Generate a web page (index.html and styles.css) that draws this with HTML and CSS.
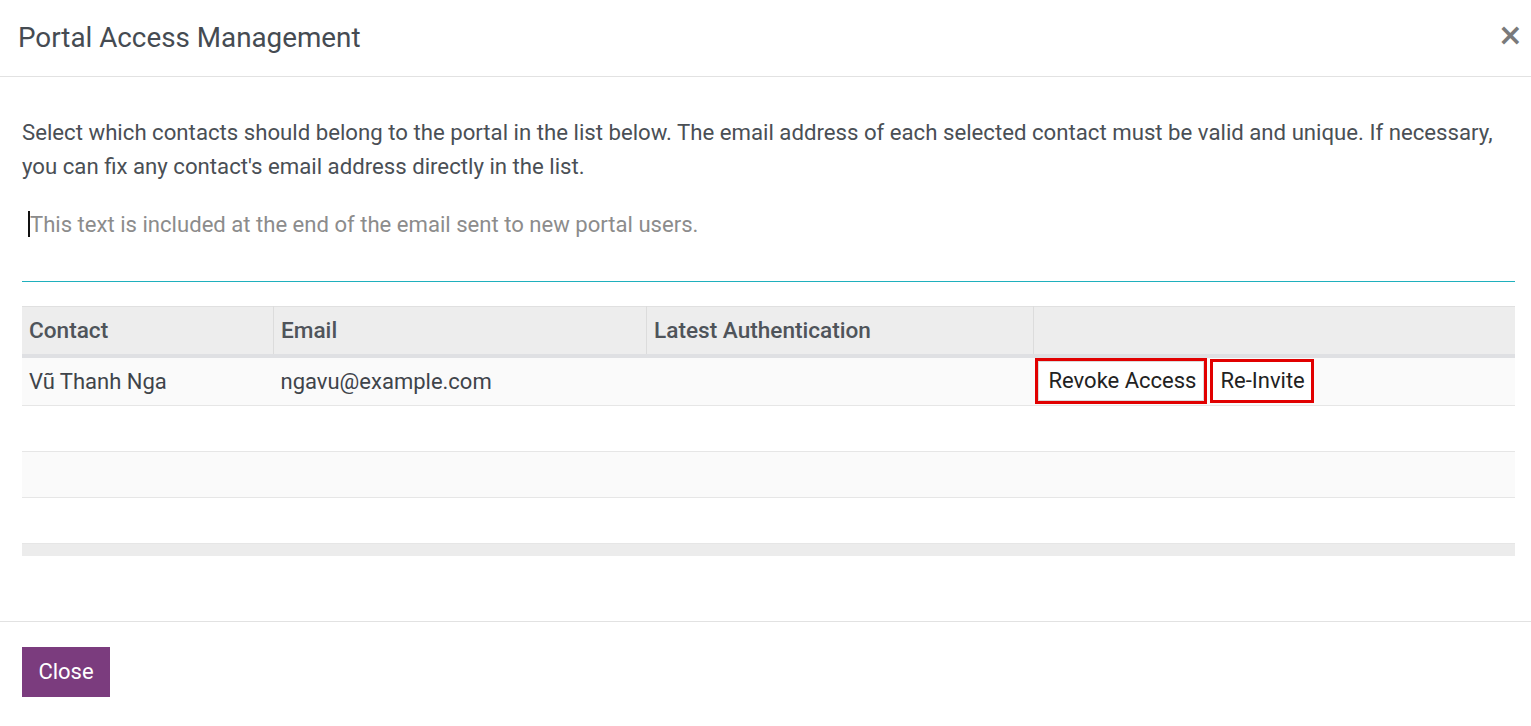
FILE: index.html
```html
<!DOCTYPE html>
<html lang="en">
<head>
<meta charset="utf-8">
<title>Portal Access Management</title>
<link rel="stylesheet" href="styles.css">
</head>
<body>
<div class="modal">
  <header class="modal-header">
    <h4 class="modal-title">Portal Access Management</h4>
    <button class="close" aria-label="Close">×</button>
  </header>
  <main class="modal-body">
    <p class="intro">Select which contacts should belong to the portal in the list below. The email address of each selected contact must be valid and unique. If necessary, you can fix any contact's email address directly in the list.</p>
    <div class="note"><span class="caret"></span><span class="placeholder">This text is included at the end of the email sent to new portal users.</span></div>
    <table class="list">
      <thead>
        <tr>
          <th class="c1">Contact</th>
          <th class="c2">Email</th>
          <th class="c3">Latest Authentication</th>
          <th class="c4"></th>
        </tr>
      </thead>
      <tbody>
        <tr class="data">
          <td>Vũ Thanh Nga</td>
          <td>ngavu@example.com</td>
          <td></td>
          <td class="actions"><span class="hl hl1"><button class="btn">Revoke Access</button></span><span class="hl hl2"><button class="btn">Re-Invite</button></span></td>
        </tr>
        <tr class="empty white"><td></td><td></td><td></td><td></td></tr>
        <tr class="empty grey"><td></td><td></td><td></td><td></td></tr>
        <tr class="empty white"><td></td><td></td><td></td><td></td></tr>
      </tbody>
      <tfoot><tr><td colspan="4"></td></tr></tfoot>
    </table>
  </main>
  <footer class="modal-footer">
    <button class="btn-primary">Close</button>
  </footer>
</div>
</body>
</html>
```
FILE: styles.css
```css
html, body {
  margin: 0;
  padding: 0;
  background: #ffffff;
}
body {
  font-family: Roboto, "Noto Sans", "Liberation Sans", sans-serif;
  color: #4a4f55;
}
.modal {
  width: 1531px;
}
.modal-header {
  display: flex;
  align-items: center;
  justify-content: space-between;
  height: 77px;
  box-sizing: border-box;
  padding: 0 8px 2px 18px;
  border-bottom: 1px solid #e2e2e2;
}
.modal-title {
  margin: 0;
  font-size: 27.8px;
  font-weight: 400;
  color: #454b52;
}
.close {
  border: 0;
  background: none;
  font-family: "DejaVu Sans", sans-serif;
  font-size: 30px;
  font-weight: 700;
  color: #7a7a7a;
  padding: 0;
  line-height: 1;
  margin-top: -4px;
}
.modal-body {
  padding: 38px 16px 0 22px;
}
.intro {
  margin: 0;
  font-size: 22.2px;
  line-height: 34px;
  color: #4a4f55;
}
.note {
  margin-top: 19px;
  height: 80px;
  box-sizing: border-box;
  border-bottom: 1px solid #1fb0bd;
  padding: 8px 0 0 6px;
  display: flex;
  align-items: flex-start;
}
.caret {
  width: 2px;
  height: 26px;
  background: #111;
  margin-top: 1px;
}
.placeholder {
  font-size: 22.1px;
  line-height: 28px;
  color: #8c8c8c;
}
.list {
  margin-top: 24px;
  width: 100%;
  border-collapse: collapse;
  font-size: 22px;
}
.list thead tr {
  background: #ededed;
  border-top: 1px solid #e0e0e0;
}
.list th {
  text-align: left;
  font-weight: 500;
  font-size: 22.6px;
  color: #4f545a;
  height: 47px;
  padding: 0 7px;
  border-left: 1px solid #dcdcdc;
  border-bottom: 4px solid #dfe0e3;
}
.list th.c1 { border-left: 0; width: 237px; }
.list th.c2 { width: 358px; }
.list th.c3 { width: 372px; }
.list td {
  padding: 0 7px;
  color: #3f444a;
  border-bottom: 1px solid #e6e6e6;
}
.list tr.data {
  background: #fafafa;
  height: 49px;
}
.list tr.empty { height: 46px; }
.list tr.white { background: #ffffff; }
.list tr.grey { background: #fafafa; }
.list td.actions {
  padding: 0 0 0 1px;
  white-space: nowrap;
}
.hl {
  display: inline-block;
  border: 3px solid #e10000;
  vertical-align: middle;
  line-height: 0;
}
.hl2 { margin-left: 3px; }
.btn {
  font-family: Roboto, "Noto Sans", "Liberation Sans", sans-serif;
  font-size: 22px;
  color: #222;
  background: #fff;
  border: 1px solid #dadada;
  line-height: 26px;
}
.hl1 .btn { padding: 6px 7px 6px 10px; }
.hl2 .btn { border-color: #fff; padding: 5px 5px 5px 6px; }
.list tfoot td {
  background: #ececec;
  height: 12px;
  padding: 0;
  border: 0;
}
.modal-footer {
  margin-top: 65px;
  border-top: 1px solid #e2e2e2;
  padding: 25px 22px 0;
}
.btn-primary {
  background: #7b3c7e;
  color: #fff;
  border: 0;
  font-family: Roboto, "Noto Sans", "Liberation Sans", sans-serif;
  font-size: 22px;
  width: 88px;
  height: 50px;
  padding: 0;
}
```
